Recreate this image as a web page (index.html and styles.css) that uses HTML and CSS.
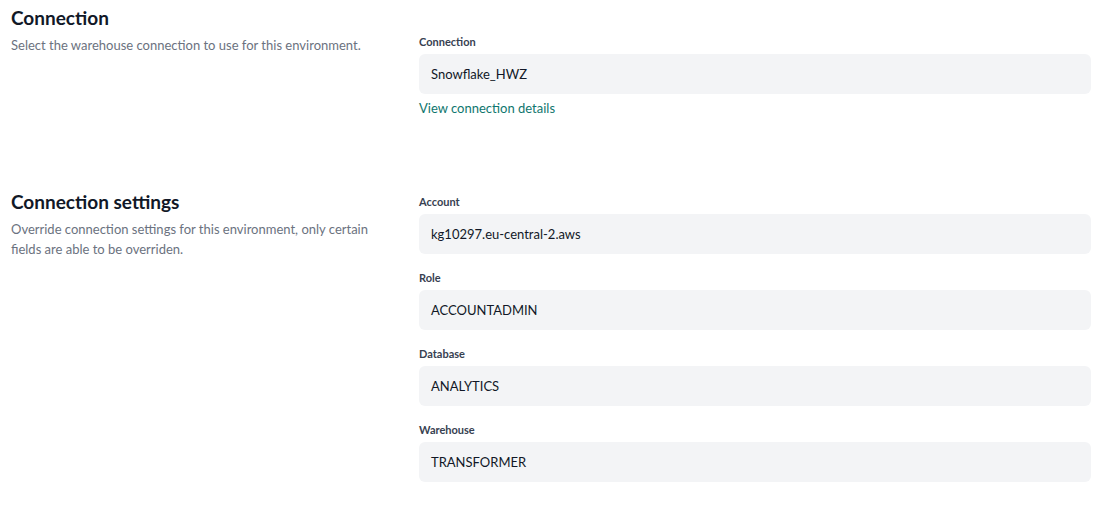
FILE: index.html
```html
<!DOCTYPE html>
<html lang="en">
<head>
<meta charset="utf-8">
<title>Connection</title>
<link rel="stylesheet" href="styles.css">
</head>
<body>
<main class="page">
  <section class="section section-first">
    <div class="intro">
      <h2 class="title">Connection</h2>
      <p class="desc">Select the warehouse connection to use for this environment.</p>
    </div>
    <div class="fields fields-offset">
      <div class="field">
        <label class="label">Connection</label>
        <div class="input">Snowflake_HWZ</div>
      </div>
      <a class="link" href="#">View connection details</a>
    </div>
  </section>

  <section class="section">
    <div class="intro">
      <h2 class="title">Connection settings</h2>
      <p class="desc">Override connection settings for this environment, only certain fields are able to be overriden.</p>
    </div>
    <div class="fields">
      <div class="field">
        <label class="label">Account</label>
        <div class="input">kg10297.eu-central-2.aws</div>
      </div>
      <div class="field">
        <label class="label">Role</label>
        <div class="input">ACCOUNTADMIN</div>
      </div>
      <div class="field">
        <label class="label">Database</label>
        <div class="input">ANALYTICS</div>
      </div>
      <div class="field">
        <label class="label">Warehouse</label>
        <div class="input">TRANSFORMER</div>
      </div>
    </div>
  </section>
</main>
</body>
</html>
```

FILE: styles.css
```css
* { box-sizing: border-box; }

html, body {
  margin: 0;
  padding: 0;
  background: #ffffff;
}

body {
  font-family: Lato, "Noto Sans", "Liberation Sans", sans-serif;
  color: #111827;
}

.page {
  padding: 6px 28px 0 11px;
  display: flex;
  flex-direction: column;
  gap: 72px;
}

.section {
  display: grid;
  grid-template-columns: 376px 1fr;
  column-gap: 32px;
  align-items: start;
}

.title {
  margin: 0;
  font-size: 19px;
  line-height: 24px;
  font-weight: 700;
  color: #111827;
}

.desc {
  margin: 5px 0 0;
  font-size: 13px;
  line-height: 20px;
  color: #6b7280;
}

.fields {
  display: flex;
  flex-direction: column;
  gap: 16px;
  padding-top: 4px;
}

.fields-offset {
  padding-top: 28px;
  gap: 4px;
}

.field {
  display: flex;
  flex-direction: column;
  gap: 4px;
}

.label {
  font-size: 11px;
  line-height: 16px;
  font-weight: 700;
  color: #374151;
}

.input {
  height: 40px;
  display: flex;
  align-items: center;
  padding: 0 12px;
  background: #f3f4f6;
  border-radius: 6px;
  font-size: 13px;
  color: #111827;
}

.link {
  font-size: 13px;
  line-height: 20px;
  color: #0f766e;
  text-decoration: none;
}
```
